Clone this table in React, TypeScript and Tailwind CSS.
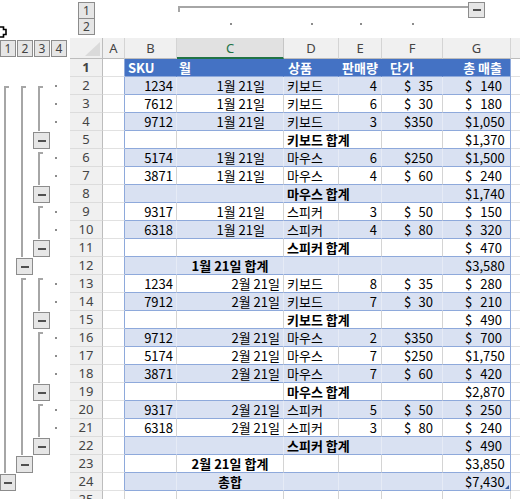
import React from "react"

// Excel sheet with a subtotal outline: row gutter on the left, column outline on top.

type Item = {
  kind: "item"
  sku: string
  date: string
  product: string
  qty: string
  price: string
  total: string
}
type Sub = { kind: "sub"; label: string; total: string }
type Day = { kind: "day"; label: string; total: string }
type Row = Item | Sub | Day

const item = (
  sku: string,
  date: string,
  product: string,
  qty: string,
  price: string,
  total: string,
): Item => ({ kind: "item", sku, date, product, qty, price, total })

// rows 2..24
const ROWS: Row[] = [
  item("1234", "1월 21일", "키보드", "4", "35", "140"),
  item("7612", "1월 21일", "키보드", "6", "30", "180"),
  item("9712", "1월 21일", "키보드", "3", "350", "1,050"),
  { kind: "sub", label: "키보드 합계", total: "1,370" },
  item("5174", "1월 21일", "마우스", "6", "250", "1,500"),
  item("3871", "1월 21일", "마우스", "4", "60", "240"),
  { kind: "sub", label: "마우스 합계", total: "1,740" },
  item("9317", "1월 21일", "스피커", "3", "50", "150"),
  item("6318", "1월 21일", "스피커", "4", "80", "320"),
  { kind: "sub", label: "스피커 합계", total: "470" },
  { kind: "day", label: "1월 21일 합계", total: "3,580" },
  item("1234", "2월 21일", "키보드", "8", "35", "280"),
  item("7912", "2월 21일", "키보드", "7", "30", "210"),
  { kind: "sub", label: "키보드 합계", total: "490" },
  item("9712", "2월 21일", "마우스", "2", "350", "700"),
  item("5174", "2월 21일", "마우스", "7", "250", "1,750"),
  item("3871", "2월 21일", "마우스", "7", "60", "420"),
  { kind: "sub", label: "마우스 합계", total: "2,870" },
  item("9317", "2월 21일", "스피커", "5", "50", "250"),
  item("6318", "2월 21일", "스피커", "3", "80", "240"),
  { kind: "sub", label: "스피커 합계", total: "490" },
  { kind: "day", label: "2월 21일 합계", total: "3,850" },
  { kind: "day", label: "총합", total: "7,430" },
]

// outline groups per level: [first row, last row], button sits on last + 1
const GROUPS: [number, number][][] = [
  [[2, 23]],
  [
    [2, 11],
    [13, 22],
  ],
  [
    [2, 4],
    [6, 7],
    [9, 10],
    [13, 14],
    [16, 18],
    [20, 21],
  ],
]

type State = "start" | "mid" | "btn" | null

function stateOf(groups: [number, number][], r: number): State {
  for (const [s, e] of groups) {
    if (r === s) return "start"
    if (r > s && r <= e) return "mid"
    if (r === e + 1) return "btn"
  }
  return null
}

const COLS =
  "grid grid-cols-[70px_33px_22px_52px_107px_55px_43px_61px_68px_1fr]"
const FONT = "font-['Noto_Sans_CJK_KR',sans-serif]"
const HEAD_FONT = "font-['Noto_Sans','Noto_Sans_CJK_KR',sans-serif]"

function MinusBox({ className }: { className: string }) {
  return (
    <div
      className={`flex items-center justify-center border border-[#8c8c8c] bg-[#e6e6e6] ${className}`}
    >
      <div className="h-[2px] w-[8px] bg-[#505050]" />
    </div>
  )
}

function LevelBox({ n, className }: { n: number; className: string }) {
  return (
    <div
      className={`flex items-center justify-center border border-[#8c8c8c] bg-[#e6e6e6] text-[12px] leading-none text-[#444] ${HEAD_FONT} ${className}`}
    >
      {n}
    </div>
  )
}

function OutlineLevel({
  state,
  line,
  w,
  first,
}: {
  state: State
  line: string
  w: string
  first: boolean
}) {
  return (
    <div className="relative h-full">
      {state === "start" && (
        <div
          className={`absolute bottom-0 w-[5px] border-t-2 border-l-2 border-[#a6a6a6] ${line} ${
            first ? "top-[9px]" : "top-[3px]"
          }`}
        />
      )}
      {state === "mid" && (
        <div className={`absolute top-0 bottom-0 w-[2px] bg-[#a6a6a6] ${line}`} />
      )}
      {state === "btn" && (
        <MinusBox className={`absolute left-0 top-[1px] h-[17px] ${w}`} />
      )}
    </div>
  )
}

function Gutter({ r, detail }: { r: number; detail: boolean }) {
  const first = r === 2
  return (
    <div className="grid h-[18px] grid-cols-[16px_17px_17px_20px]">
      <OutlineLevel state={stateOf(GROUPS[0], r)} line="left-[4px]" w="w-[16px]" first={first} />
      <OutlineLevel state={stateOf(GROUPS[1], r)} line="left-[5px]" w="w-[17px]" first={first} />
      <OutlineLevel state={stateOf(GROUPS[2], r)} line="left-[5px]" w="w-[17px]" first={first} />
      <div className="flex items-center pl-[5px]">
        {detail && <div className="h-[2px] w-[2px] bg-[#8c8c8c]" />}
      </div>
    </div>
  )
}

function Money({ v, pr }: { v: string; pr: string }) {
  return (
    <div className={`flex justify-between pl-[22px] ${pr}`}>
      <span>$</span>
      <span>{v}</span>
    </div>
  )
}

function RowHead({ n }: { n: number }) {
  return (
    <div
      className={`h-[18px] border-r border-b border-r-[#bdbdbd] border-b-[#dcdcdc] bg-[#f0f0f0] text-center text-[13px] leading-[17px] text-[#444] ${HEAD_FONT}`}
    >
      {n}
    </div>
  )
}

function SheetRow({ n, row }: { n: number; row: Row | "head" | null }) {
  const inTable = row !== null
  const band = n % 2 === 0
  const bg = row === "head" ? "bg-[#4472c4]" : band ? "bg-[#d9e1f2]" : "bg-white"
  const vline =
    row === "head"
      ? "border-r-[#4472c4]"
      : band
        ? "border-r-[#e6ebf6]"
        : "border-r-[#d4d4d4]"
  const hline = inTable ? "border-b-[#8ea9db]" : "border-b-[#e1e1e1]"
  const cell = `h-[18px] overflow-visible whitespace-nowrap border-b border-r leading-[17px] ${bg} ${hline} ${vline}`
  const last = `h-[18px] whitespace-nowrap border-b border-r leading-[17px] ${bg} ${hline} ${
    inTable ? "border-r-[#8ea9db]" : "border-r-[#d4d4d4]"
  }`

  let cells: React.ReactNode
  if (row === "head") {
    cells = (
      <>
        <div className={`${cell} pl-[3px]`}>SKU</div>
        <div className={`${cell} pl-[2px]`}>월</div>
        <div className={`${cell} pl-[4px]`}>상품</div>
        <div className={`${cell} pl-[3px]`}>판매량</div>
        <div className={`${cell} pl-[8px]`}>단가</div>
        <div className={`${last} relative pr-[8px] text-right`}>총 매출</div>
      </>
    )
  } else if (row === null) {
    cells = (
      <>
        <div className={cell} />
        <div className={cell} />
        <div className={cell} />
        <div className={cell} />
        <div className={cell} />
        <div className={last} />
      </>
    )
  } else if (row.kind === "item") {
    const jan = row.date.startsWith("1")
    cells = (
      <>
        <div className={`${cell} pr-[3px] text-right`}>{row.sku}</div>
        <div className={`${cell} text-right ${jan ? "pr-[18px]" : "pr-[3px]"}`}>
          {row.date}
        </div>
        <div className={`${cell} pl-[3px]`}>{row.product}</div>
        <div className={`${cell} pr-[4px] text-right`}>{row.qty}</div>
        <div className={cell}>
          <Money v={row.price} pr="pr-[9px]" />
        </div>
        <div className={last}>
          <Money v={row.total} pr="pr-[8px]" />
        </div>
      </>
    )
  } else if (row.kind === "sub") {
    cells = (
      <>
        <div className={cell} />
        <div className={cell} />
        <div className={`${cell} col-span-2 pl-[3px] font-bold`}>{row.label}</div>
        <div className={cell} />
        <div className={last}>
          <Money v={row.total} pr="pr-[8px]" />
        </div>
      </>
    )
  } else {
    cells = (
      <>
        <div className={cell} />
        <div className={`${cell} text-center font-bold`}>{row.label}</div>
        <div className={cell} />
        <div className={cell} />
        <div className={cell} />
        <div className={`${last} relative`}>
          <Money v={row.total} pr="pr-[8px]" />
          {n === 24 && (
            <svg
              className="absolute right-[1px] bottom-[1px]"
              width="4"
              height="4"
              viewBox="0 0 4 4"
            >
              <path d="M4 0V4H0Z" fill="#2f5597" />
            </svg>
          )}
        </div>
      </>
    )
  }

  const textColor = row === "head" ? "text-white font-bold" : "text-black"

  return (
    <div className={`${COLS} text-[13px] ${FONT} ${textColor}`}>
      <Gutter r={n} detail={typeof row === "object" && row !== null && row.kind === "item"} />
      <RowHead n={n} />
      <div
        className={`h-[18px] border-r border-b border-b-[#e1e1e1] bg-white ${
          inTable ? "border-r-[#8ea9db]" : "border-r-[#d4d4d4]"
        }`}
      />
      {cells}
      <div className="h-[18px] border-b border-b-[#e1e1e1] bg-white" />
    </div>
  )
}

function ColumnOutline() {
  return (
    <div className={`${COLS} h-[38px] grid-rows-[19px_19px]`}>
      <div className="relative col-start-1 row-span-2 row-start-1">
        <svg className="absolute left-0 bottom-0" width="8" height="12" viewBox="0 0 8 12">
          <path
            d="M0 1H3.5V3.5H6V8.5H3.5V11H0"
            fill="white"
            stroke="black"
            strokeWidth="1.6"
          />
        </svg>
      </div>
      <div className="col-start-2 row-span-2 row-start-1 flex flex-col pt-[2px] pl-[8px]">
        <LevelBox n={1} className="h-[17px] w-[17px]" />
        <LevelBox n={2} className="-mt-px h-[17px] w-[17px]" />
      </div>
      <div className="col-span-4 col-start-5 row-start-1 pl-[1px] pt-[6px]">
        <div className="h-[6px] border-t-2 border-l-2 border-[#a6a6a6]" />
      </div>
      <div className="col-start-9 row-start-1 flex items-start">
        <div className="mt-[6px] h-[2px] w-[25px] bg-[#a6a6a6]" />
        <MinusBox className="mt-[2px] h-[16px] w-[17px]" />
      </div>
      <div className="col-start-5 row-start-2 flex justify-center pt-[4px]">
        <div className="h-[2px] w-[2px] bg-[#8c8c8c]" />
      </div>
      <div className="col-start-6 row-start-2 flex justify-center pt-[4px]">
        <div className="h-[2px] w-[2px] bg-[#8c8c8c]" />
      </div>
      <div className="col-start-7 row-start-2 flex justify-center pt-[4px]">
        <div className="h-[2px] w-[2px] bg-[#8c8c8c]" />
      </div>
      <div className="col-start-8 row-start-2 flex justify-center pt-[4px]">
        <div className="h-[2px] w-[2px] bg-[#8c8c8c]" />
      </div>
    </div>
  )
}

function ColumnHeaders() {
  const letter = `h-[21px] border-r border-b border-r-[#d4d4d4] border-b-[#bdbdbd] bg-[#f0f0f0] text-center text-[13px] leading-[20px] text-[#444] ${HEAD_FONT}`
  return (
    <div className={COLS}>
      <div className="flex h-[21px] gap-[1px] pt-[2px]">
        <LevelBox n={1} className="h-[17px] w-[16px]" />
        <LevelBox n={2} className="h-[17px] w-[16px]" />
        <LevelBox n={3} className="h-[17px] w-[16px]" />
        <LevelBox n={4} className="h-[17px] w-[16px]" />
      </div>
      <div className="relative h-[21px] border-r border-b border-r-[#bdbdbd] border-b-[#bdbdbd] bg-[#f0f0f0]">
        <svg className="absolute right-[2px] bottom-[2px]" width="15" height="14" viewBox="0 0 15 14">
          <path d="M15 0V14H0Z" fill="#dadada" />
        </svg>
      </div>
      <div className={letter}>A</div>
      <div className={letter}>B</div>
      <div
        className={`h-[21px] border-r border-b-2 border-r-[#c6c6c6] border-b-[#217346] bg-[#e1e1e1] text-center text-[13px] leading-[20px] text-[#217346] ${HEAD_FONT}`}
      >
        C
      </div>
      <div className={letter}>D</div>
      <div className={letter}>E</div>
      <div className={letter}>F</div>
      <div className={letter}>G</div>
      <div className="h-[21px] border-b border-b-[#bdbdbd] bg-[#f0f0f0]" />
    </div>
  )
}

export default function App() {
  return (
    <div className="h-[499px] w-[520px] overflow-hidden bg-white">
      <ColumnOutline />
      <ColumnHeaders />
      <SheetRow n={1} row="head" />
      {ROWS.map((row, i) => (
        <SheetRow key={i} n={i + 2} row={row} />
      ))}
      <SheetRow n={25} row={null} />
    </div>
  )
}
